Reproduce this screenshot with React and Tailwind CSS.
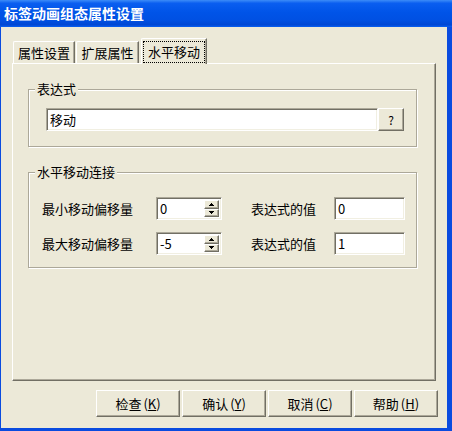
import React from 'react';

const FONT = { fontFamily: '"Noto Sans CJK SC", "Noto Sans", sans-serif' };

const raised = 'bg-[#ECE9D8] border border-t-white border-l-white border-r-[#716F64] border-b-[#716F64] shadow-[inset_-1px_-1px_0_#ACA899]';
const sunken = 'bg-white border border-t-[#ACA899] border-l-[#ACA899] border-r-white border-b-white shadow-[inset_1px_1px_0_#716F64,inset_-1px_-1px_0_#F1EFE2]';

function Tab({ label, active, className = '' }) {
  return (
    <div
      className={`flex items-center justify-center border-t border-l border-r border-t-white border-l-white border-r-[#716F64] rounded-tl-[2px] bg-[#ECE9D8] shadow-[inset_-1px_0_0_#ACA899] ${active ? 'h-[26px] relative top-[1px] z-10' : 'h-[22px]'} ${className}`}
    >
      <span className={`leading-[16px] text-[13px] text-black ${active ? 'px-[4px] py-[2px] outline-1 outline-dotted outline-black' : 'px-[2px]'}`}>{label}</span>
    </div>
  );
}

function GroupBox({ title, className = '', children }) {
  return (
    <div className={`relative border border-[#ACA899] shadow-[inset_1px_1px_0_white,1px_1px_0_white] ${className}`}>
      <span className="absolute -top-[9px] left-[6px] bg-[#ECE9D8] px-[2px] text-[13px] leading-[16px] text-black">{title}</span>
      {children}
    </div>
  );
}

function Arrow({ up }) {
  return (
    <svg width="5" height="3" viewBox="0 0 5 3">
      {up ? <path d="M2 0h1v1h1v1h1v1H0V2h1V1h1z" fill="black" /> : <path d="M0 0h5v1H4v1H3v1H2V2H1V1H0z" fill="black" />}
    </svg>
  );
}

function Spin({ value }) {
  return (
    <div className={`flex w-[66px] h-[23px] ${sunken} p-[2px]`}>
      <div className="flex-1 text-[13px] leading-[17px] pl-[1px] text-black">{value}</div>
      <div className="flex flex-col w-[15px]">
        <div className={`flex-1 flex items-center justify-center ${raised}`}><Arrow up /></div>
        <div className={`flex-1 flex items-center justify-center ${raised}`}><Arrow /></div>
      </div>
    </div>
  );
}

function Field({ value, className = '' }) {
  return (
    <div className={`h-[23px] ${sunken} px-[3px] py-[2px] text-[13px] leading-[17px] text-black ${className}`}>{value}</div>
  );
}

function Btn({ label, k }) {
  return (
    <button className={`w-[84px] h-[27px] ${raised} flex items-center justify-center text-[13px] text-black`}>
      {label}<span className="ml-[2px]">(<span className="underline">{k}</span>)</span>
    </button>
  );
}

export default function App() {
  return (
    <div style={FONT} className="w-[452px] h-[431px] flex flex-col bg-[#0A4BDF] overflow-hidden">
      <div className="h-[27px] shrink-0 flex items-center pl-[4px] text-white font-bold text-[14px] bg-[linear-gradient(180deg,#3C8CF8_0%,#0A5EF0_12%,#0054E8_45%,#0050E2_75%,#0047D4_92%,#0A60F2_100%)]">
        标签动画组态属性设置
      </div>
      <div className="flex-1 ml-[1px] mr-[5px] mb-[3px] bg-[#ECE9D8] flex flex-col px-[11px] pt-[11px]">
        <div className="flex items-end h-[25px] pl-[1px]">
          <Tab label="属性设置" className="w-[62px]" />
          <Tab label="扩展属性" className="w-[63px] ml-[1px]" />
          <Tab label="水平移动" active className="w-[66px] ml-[2px]" />
        </div>
        <div className="h-[318px] border border-t-white border-l-white border-r-[#716F64] border-b-[#716F64] shadow-[inset_-1px_-1px_0_#ACA899] pl-[15px] pr-[18px] pt-[25px]">
          <GroupBox title="表达式" className="h-[58px] pl-[17px] pt-[18px]">
            <div className="flex">
              <Field value="移动" className="w-[332px]" />
              <div className={`w-[26px] h-[23px] ${raised} flex items-center justify-center text-[12px] text-black`}>?</div>
            </div>
          </GroupBox>
          <GroupBox title="水平移动连接" className="h-[96px] mt-[25px] pl-[13px] pt-[24px]">
            <div className="flex flex-col gap-[12px]">
              <div className="flex items-center">
                <span className="w-[114px] text-[13px] text-black">最小移动偏移量</span>
                <Spin value="0" />
                <span className="ml-[29px] w-[83px] text-[13px] text-black">表达式的值</span>
                <Field value="0" className="w-[71px]" />
              </div>
              <div className="flex items-center">
                <span className="w-[114px] text-[13px] text-black">最大移动偏移量</span>
                <Spin value="-5" />
                <span className="ml-[29px] w-[83px] text-[13px] text-black">表达式的值</span>
                <Field value="1" className="w-[71px]" />
              </div>
            </div>
          </GroupBox>
        </div>
        <div className="flex justify-end gap-[2px] mt-[9px] -mr-[2px]">
          <Btn label="检查" k="K" />
          <Btn label="确认" k="Y" />
          <Btn label="取消" k="C" />
          <Btn label="帮助" k="H" />
        </div>
      </div>
    </div>
  );
}
